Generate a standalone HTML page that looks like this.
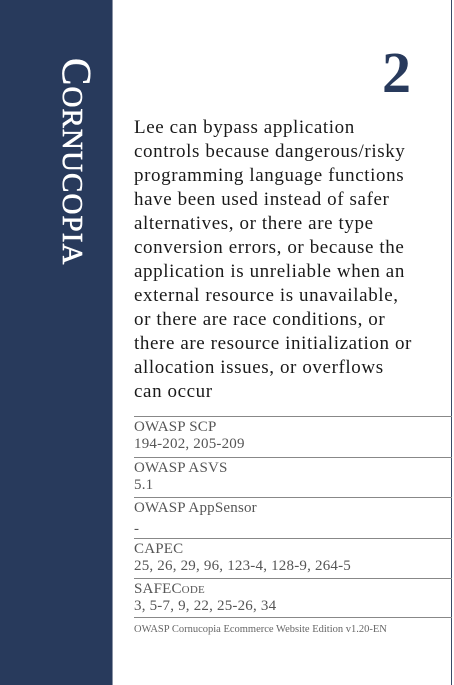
<!DOCTYPE html>
<html><head><meta charset="utf-8"><style>
html,body{margin:0;padding:0;background:#fff;width:454px;height:685px;overflow:hidden;position:relative;font-family:"Liberation Serif",serif;}
.side{position:absolute;left:0;top:0;width:112px;height:685px;background:#283a5c;border-right:1px solid #8a93a5;}
.edge{position:absolute;left:451px;top:0;width:1px;height:685px;background:#3a4a68;}
.title{position:absolute;left:97px;top:58px;transform-origin:0 0;transform:rotate(90deg);color:#fff;font-size:41px;font-variant:small-caps;letter-spacing:1.1px;white-space:nowrap;line-height:40px;-webkit-text-stroke:0.6px #fff;}
.num{position:absolute;left:382px;top:44px;font-size:58px;font-weight:bold;color:#283a5c;line-height:58px;}
.body{position:absolute;left:134px;top:116px;font-size:19px;line-height:24px;color:#1a1a1a;white-space:nowrap;letter-spacing:0.6px;}
.ref{position:absolute;left:134px;width:318px;border-top:1px solid #888;color:#555;font-size:15px;letter-spacing:0.2px;line-height:17px;padding-top:2px;}
.foot{position:absolute;left:134px;top:624px;font-size:10.5px;color:#666;}
</style></head><body>
<div class="side"></div>
<div class="edge"></div>
<div class="title">Cornucopia</div>
<div class="num">2</div>
<div class="body">Lee can bypass application<br>controls because dangerous/risky<br>programming language functions<br>have been used instead of safer<br>alternatives, or there are type<br>conversion errors, or because the<br>application is unreliable when an<br>external resource is unavailable,<br>or there are race conditions, or<br>there are resource initialization or<br>allocation issues, or overflows<br>can occur</div>
<div class="ref" style="top:416px">OWASP SCP<br>194-202, 205-209</div>
<div class="ref" style="top:457px">OWASP ASVS<br>5.1</div>
<div class="ref" style="top:497px">OWASP AppSensor<br><span style="line-height:24px">-</span></div>
<div class="ref" style="top:538px">CAPEC<br>25, 26, 29, 96, 123-4, 128-9, 264-5</div>
<div class="ref" style="top:578px"><span style="font-variant:small-caps">SAFECode</span><br>3, 5-7, 9, 22, 25-26, 34</div>
<div class="ref" style="top:617px;height:0;padding:0"></div>
<div class="foot">OWASP Cornucopia Ecommerce Website Edition v1.20-EN</div>
</body></html>
